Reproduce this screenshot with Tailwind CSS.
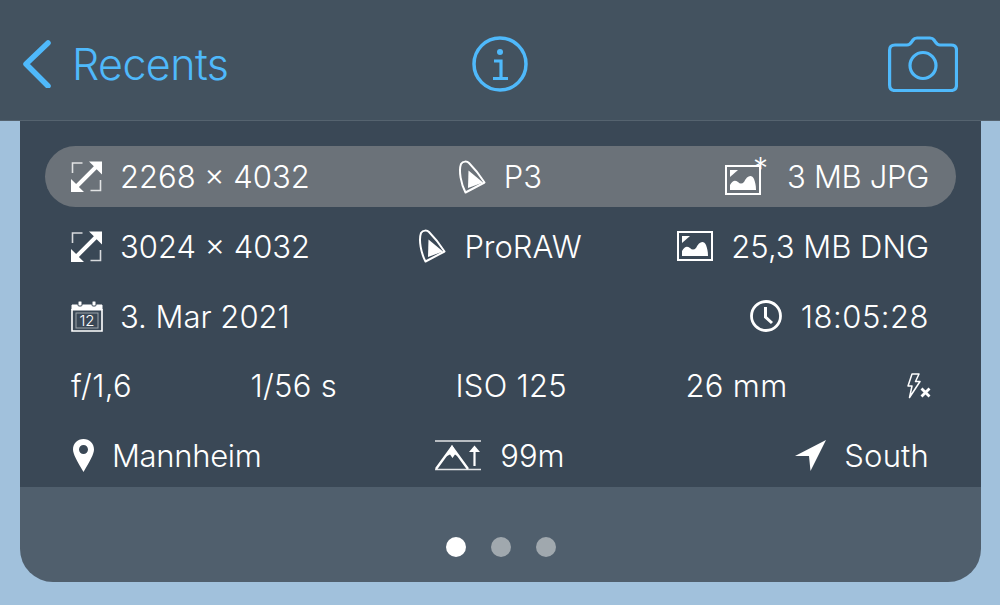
<!DOCTYPE html>
<html lang="en">
<head>
  <meta charset="UTF-8" />
  <title>Photo info</title>
  <script src="https://cdn.jsdelivr.net/npm/@tailwindcss/browser@4"></script>
</head>
<body class="bg-[#a1c1dc] h-[605px] w-[1000px] overflow-hidden font-['Inter',sans-serif] text-white">

  <svg width="0" height="0" class="absolute">
    <symbol id="expand" viewBox="0 0 31 31">
      <path d="M1.500 12V2H11.500M19.500 29.500H29.500V19" fill="none" stroke="#fff" stroke-opacity=".8" stroke-width="1.600"/>
      <path d="M18 0.500H31V13.500L25.650 8.150L7.900 25.900L13 31H0V18L5.100 23.100L22.850 5.350Z" fill="#fff"/>
    </symbol>
    <symbol id="sail" viewBox="0 0 28 34">
      <path d="M3 4C5 1 9 1 11 3C16 8 23 17 26.500 22.500L7.500 32.500C3 24 0.500 11 3 4Z" fill="none" stroke="#fff" stroke-width="2" stroke-linejoin="round"/>
      <path d="M10.500 10.500L25 22.500L10 28Z" fill="#fff"/>
    </symbol>
    <symbol id="photo" viewBox="0 0 36 30">
      <rect x="1" y="1" width="34" height="28" fill="none" stroke="#fff" stroke-width="2"/>
      <path d="M5 5H13L5 12Z" fill="#fff"/>
      <path d="M5 25V20C8 15 10 15 13 17C15 19 17 19 19 17C22 10 27 9 29 14C30 17 31 20 31 25Z" fill="#fff"/>
    </symbol>
  </svg>

  <!-- top bar -->
  <header class="h-[121px] bg-[#43525f] border-b border-[#55636f] grid grid-cols-3 items-center pt-[8px] px-[23px]">
    <div class="flex items-center gap-[21px]">
      <svg width="28" height="48" viewBox="0 0 28 48" fill="none" stroke="#4fb9fb" stroke-width="5.500" stroke-linecap="round" stroke-linejoin="round"><path d="M25 3L3 24L25 46"/></svg>
      <span class="text-[43px] leading-none text-[#4fb9fb] tracking-[-0.6px] font-light">Recents</span>
    </div>
    <div class="flex justify-center">
      <svg width="56" height="56" viewBox="0 0 56 56" fill="none" stroke="#4fb9fb" stroke-width="3.500"><circle cx="28" cy="28" r="26"/><path d="M22 25H29V42M21 42.500H36" stroke-width="3.200"/><circle cx="28" cy="16" r="3" fill="#4fb9fb" stroke="none"/></svg>
    </div>
    <div class="flex justify-end pr-[19px]">
      <svg width="70" height="56" viewBox="0 0 70 56" fill="none" stroke="#4fb9fb" stroke-width="3.200" stroke-linejoin="round"><path d="M7 9H19C22 9 23 7 25 4C26 2.500 27.500 2 29 2H42C43.500 2 45 2.500 46 4C48 7 49 9 52 9H63C66.500 9 68.500 11 68.500 14V49C68.500 52.500 66.500 54.500 63 54.500H7C3.500 54.500 1.600 52.500 1.600 49V14C1.600 11 3.500 9 7 9Z"/><circle cx="35" cy="29.500" r="13"/></svg>
    </div>
  </header>

  <!-- info card -->
  <main class="mx-[20px] w-[961px] rounded-b-[33px] overflow-hidden bg-[#505f6d]">
    <section class="bg-[#3a4856] h-[366px] pt-[25px] px-[25px] flex flex-col gap-[8.75px] text-[31px] leading-none font-light">

      <div class="h-[61px] shrink-0 rounded-full bg-[#6b7279] grid grid-cols-3 items-center pl-[26px] pr-[27px]">
        <div class="flex items-center gap-[18px]">
          <svg width="31" height="31"><use href="#expand"/></svg>
          <span>2268 × 4032</span>
        </div>
        <div class="flex items-center justify-center gap-[18px]">
          <svg width="28" height="34"><use href="#sail"/></svg>
          <span>P3</span>
        </div>
        <div class="flex items-center justify-end gap-[26px]">
          <div class="relative">
            <svg width="36" height="30" class="block mt-[6px]"><use href="#photo"/></svg>
            <span class="absolute right-[-7px] top-[-6px] text-[30px] leading-none">*</span>
          </div>
          <span class="tracking-[-0.3px]">3 MB JPG</span>
        </div>
      </div>

      <div class="h-[61px] shrink-0 grid grid-cols-3 items-center pl-[26px] pr-[27px]">
        <div class="flex items-center gap-[18px]">
          <svg width="31" height="31"><use href="#expand"/></svg>
          <span>3024 × 4032</span>
        </div>
        <div class="flex items-center justify-center gap-[18px]">
          <svg width="28" height="34"><use href="#sail"/></svg>
          <span>ProRAW</span>
        </div>
        <div class="flex items-center justify-end gap-[18px]">
          <svg width="36" height="30"><use href="#photo"/></svg>
          <span>25,3 MB DNG</span>
        </div>
      </div>

      <div class="h-[61px] shrink-0 flex justify-between items-center pl-[26px] pr-[27px]">
        <div class="flex items-center gap-[17px]">
          <svg width="32" height="32" viewBox="0 0 32 32" fill="none" stroke="#fff">
            <path d="M1 5H31V10H1Z" fill="#fff" stroke-width="1"/>
            <rect x="7" y="1" width="4" height="5" rx="1" fill="#fff" stroke="#3a4856"/>
            <rect x="21" y="1" width="4" height="5" rx="1" fill="#fff" stroke="#3a4856"/>
            <path d="M1 9V31H31V9" stroke-width="1.600"/>
            <rect x="5" y="13" width="22" height="15" stroke-width="1" stroke-opacity=".5"/>
            <text x="16" y="26" text-anchor="middle" font-size="15" fill="#fff" stroke="none" font-family="Inter">12</text>
          </svg>
          <span>3. Mar 2021</span>
        </div>
        <div class="flex items-center gap-[19px]">
          <svg width="32" height="32" viewBox="0 0 32 32" fill="none" stroke="#fff"><circle cx="16" cy="16" r="14.500" stroke-width="2.800"/><path d="M15.500 7V17L22 23" stroke-width="3"/></svg>
          <span class="tracking-[0.5px]">18:05:28</span>
        </div>
      </div>

      <div class="h-[61px] shrink-0 flex justify-between items-center pl-[26px] pr-[25px] tracking-[0.3px]">
        <span>f/1,6</span>
        <span>1/56 s</span>
        <span>ISO 125</span>
        <span>26 mm</span>
        <svg width="25" height="26" viewBox="0 0 25 26" fill="none" stroke="#fff"><path d="M6 1H13L9.500 8.500H14L3.500 24.500L6 13H2Z" stroke-width="1.500" stroke-linejoin="round"/><path d="M15.500 15.500L23.500 23.500M23.500 15.500L15.500 23.500" stroke-width="2.800"/></svg>
      </div>

      <div class="h-[61px] shrink-0 grid grid-cols-3 items-center pl-[26px] pr-[27px]">
        <div class="flex items-center gap-[18px] pl-[2px]">
          <svg width="21" height="33" viewBox="0 0 21 33"><path fill-rule="evenodd" d="M10.500 0C16.500 0 21 4.500 21 10.500C21 15 17 22 10.500 33C4 22 0 15 0 10.500C0 4.500 4.500 0 10.500 0ZM10.500 6C8 6 6 8 6 10.500S8 15 10.500 15S15 13 15 10.500S13 6 10.500 6Z" fill="#fff"/></svg>
          <span class="tracking-[-0.3px]">Mannheim</span>
        </div>
        <div class="flex items-center justify-center gap-[19px]">
          <svg width="46" height="31" viewBox="0 0 46 31" fill="none" stroke="#fff"><path d="M0 1H46M0 29.500H46" stroke-width="1.400" stroke-opacity=".85"/><path d="M1 29L17 7L33 29" stroke-width="2.400"/><path d="M10 17L17 5L24 17L20 14.500L17.500 18L15 14.500Z" fill="#fff" stroke="none"/><path d="M39.500 9V26" stroke-width="2.200"/><path d="M34 12L39.500 5.500L45 12Z" fill="#fff" stroke="none"/></svg>
          <span>99m</span>
        </div>
        <div class="flex items-center justify-end gap-[18px]">
          <svg width="31" height="31" viewBox="0 0 31 31"><path d="M31 0L15.500 31L14 16L0 16Z" fill="#fff"/></svg>
          <span class="tracking-[0.2px]">South</span>
        </div>
      </div>
    </section>

    <!-- page dots -->
    <div class="h-[95px] pt-[50px] flex justify-center gap-[25px]">
      <span class="w-[20px] h-[20px] rounded-full bg-white"></span>
      <span class="w-[20px] h-[20px] rounded-full bg-[#a0a8ae]"></span>
      <span class="w-[20px] h-[20px] rounded-full bg-[#a0a8ae]"></span>
    </div>
  </main>

</body>
</html>
